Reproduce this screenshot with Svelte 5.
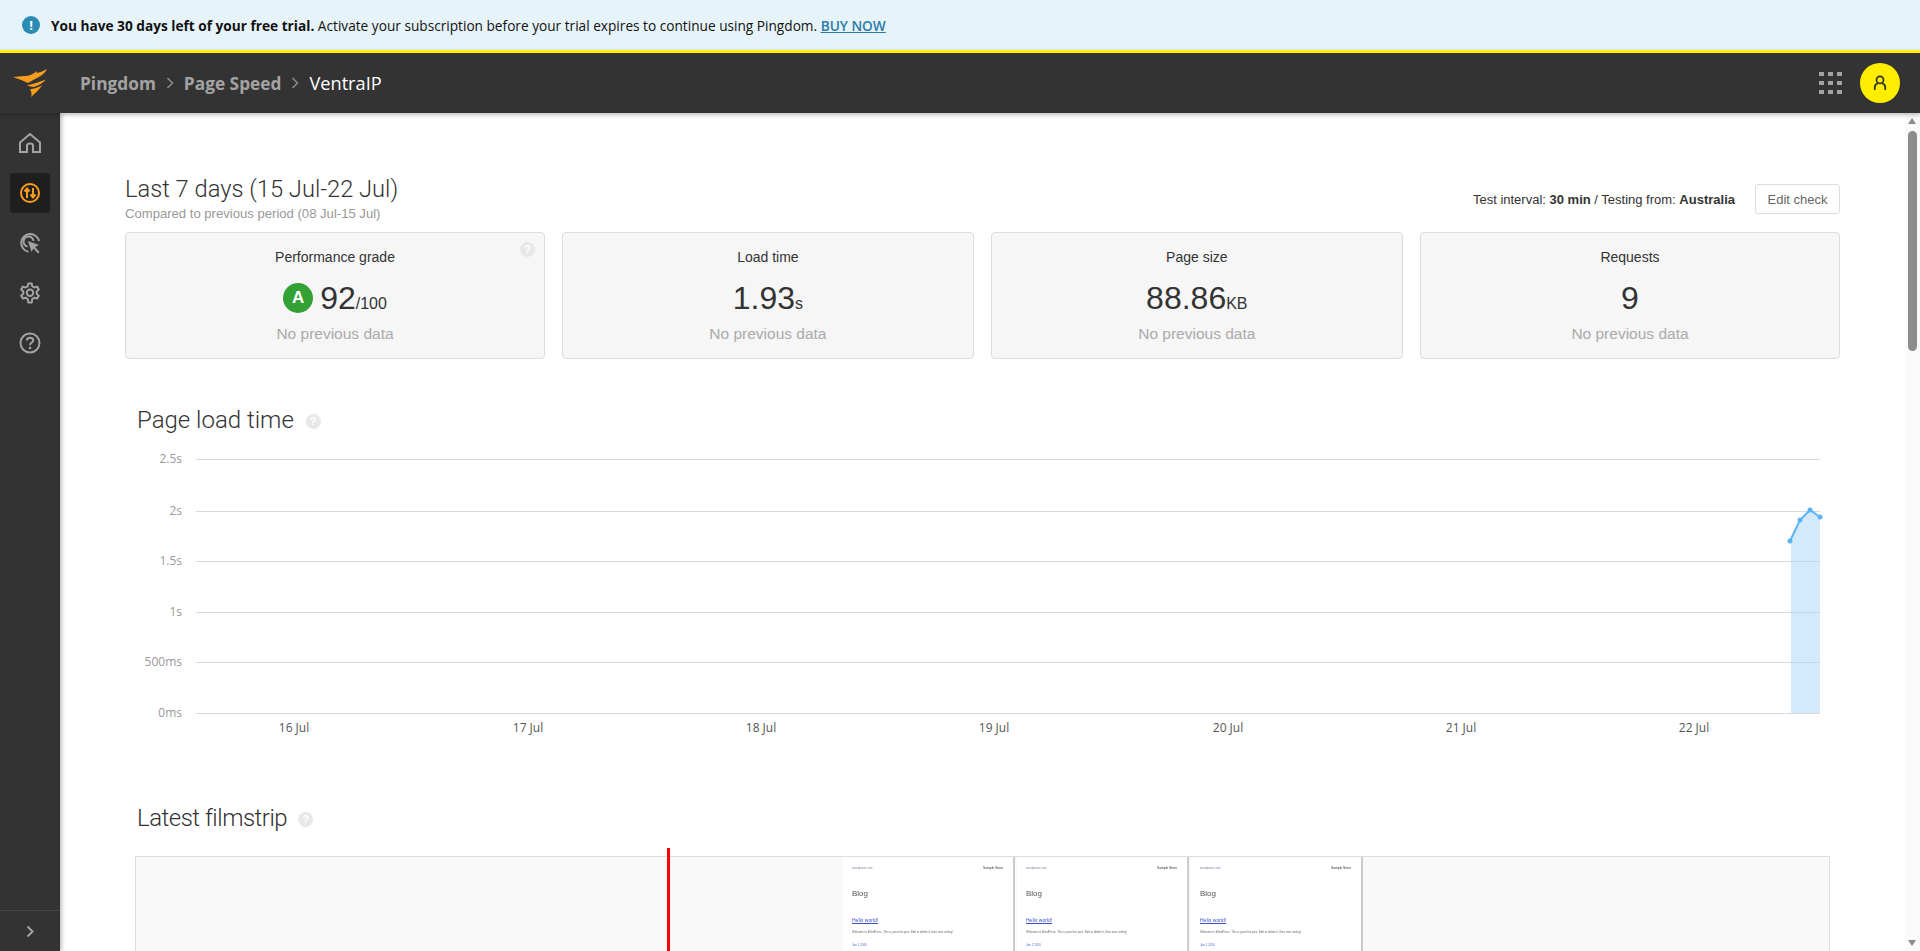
<script>
  const cards = [
    { label: 'Performance grade', value: '92', unit: '/100', grade: 'A', help: true },
    { label: 'Load time', value: '1.93', unit: 's' },
    { label: 'Page size', value: '88.86', unit: 'KB' },
    { label: 'Requests', value: '9', unit: '' }
  ];

  const grid = [
    { y: 458, label: '2.5s' },
    { y: 510, label: '2s' },
    { y: 560, label: '1.5s' },
    { y: 611, label: '1s' },
    { y: 661, label: '500ms' },
    { y: 712, label: '0ms' }
  ];
  const days = [
    { x: 294, label: '16 Jul' },
    { x: 528, label: '17 Jul' },
    { x: 761, label: '18 Jul' },
    { x: 994, label: '19 Jul' },
    { x: 1228, label: '20 Jul' },
    { x: 1461, label: '21 Jul' },
    { x: 1694, label: '22 Jul' }
  ];
  const points = [[1790, 540], [1800, 519], [1810, 509], [1820, 516]];
  const line = points.map((p) => p.join(',')).join(' ');
  const area = `1791,712 1791,538 1800,519 1810,509 1820,516 1820,712`;
</script>

<div class="page">
  <div class="banner">
    <span class="info">!</span>
    <p><b>You have 30 days left of your free trial.</b> Activate your subscription before your trial expires to continue using Pingdom. <a href="#buy">BUY NOW</a></p>
  </div>

  <header>
    <svg class="logo" viewBox="0 0 34 28" width="34" height="28">
      <path fill="#f99d1c" d="M0 8 L12 7 Q18 7 24 2 L23.5 4 Q29 3 34 0 Q31 6 24 9 Q20 11 15 14 Q9 11 0 8Z"/>
      <path fill="#f99d1c" d="M14 16.5 Q24 14 33 10.5 Q29 15 21 18 Q17 17.5 14 16.5Z"/>
      <path fill="#f99d1c" d="M17 20.5 Q23 19.5 29 16.5 Q26 21 18 28 Q19.5 24 17 20.5Z"/>
    </svg>
    <nav>
      <span class="crumb">Pingdom</span>
      <svg class="sep" viewBox="0 0 8 12" width="8" height="12"><path d="M1.5 1 L6.5 6 L1.5 11" fill="none" stroke="#8a8a8a" stroke-width="1.6"/></svg>
      <span class="crumb">Page Speed</span>
      <svg class="sep" viewBox="0 0 8 12" width="8" height="12"><path d="M1.5 1 L6.5 6 L1.5 11" fill="none" stroke="#8a8a8a" stroke-width="1.6"/></svg>
      <span class="current">VentraIP</span>
    </nav>
    <div class="apps">
      {#each Array(9) as _}<i></i>{/each}
    </div>
    <div class="avatar">
      <svg viewBox="0 0 16 18" width="14" height="16">
        <circle cx="8" cy="5.5" r="4" fill="none" stroke="#333" stroke-width="2"/>
        <path d="M2 17 V14 Q2 10.5 5.5 9.5 M14 17 V14 Q14 10.5 10.5 9.5" fill="none" stroke="#333" stroke-width="2"/>
      </svg>
    </div>
  </header>

  <div class="body">
    <aside>
      <div class="side-item">
        <svg viewBox="0 0 22 20" width="22" height="20"><path d="M1 9.5 L11 1 L21 9.5 V19 H14 V12.5 Q14 10.5 11 10.5 Q8 10.5 8 12.5 V19 H1Z" fill="none" stroke="#a3a3a3" stroke-width="2"/></svg>
      </div>
      <div class="side-item active">
        <svg viewBox="0 0 20 20" width="20" height="20">
          <circle cx="10" cy="10" r="9" fill="none" stroke="#f99d1c" stroke-width="2"/>
          <path d="M7 15 V6 M4.5 8.5 L7 5.5 L9.5 8.5 M13 5 V14 M10.5 11.5 L13 14.5 L15.5 11.5" fill="none" stroke="#f99d1c" stroke-width="2"/>
        </svg>
      </div>
      <div class="side-item">
        <svg viewBox="0 0 22 22" width="22" height="22">
          <path d="M20 9 A9 9 0 1 0 9.5 19.8" fill="none" stroke="#a3a3a3" stroke-width="2"/>
          <path d="M14.5 9 A5 5 0 1 0 8.5 14.5" fill="none" stroke="#a3a3a3" stroke-width="2"/>
          <path d="M9 9 L20 13 L16 15 L20.5 20 L19 21.5 L14.5 16.5 L12.5 20Z" fill="#a3a3a3"/>
        </svg>
      </div>
      <div class="side-item">
        <svg viewBox="0 0 22 22" width="22" height="22">
          <path d="M9.3 1.5 H12.7 L13.3 4.3 L15.4 5.5 L18.1 4.6 L19.8 7.5 L17.7 9.4 V11.8 L19.8 13.7 L18.1 16.6 L15.4 15.7 L13.3 17 L12.7 20.5 H9.3 L8.7 17 L6.6 15.7 L3.9 16.6 L2.2 13.7 L4.3 11.8 V9.4 L2.2 7.5 L3.9 4.6 L6.6 5.5 L8.7 4.3Z" fill="none" stroke="#a3a3a3" stroke-width="2" stroke-linejoin="round"/>
          <circle cx="11" cy="10.8" r="3.2" fill="none" stroke="#a3a3a3" stroke-width="2"/>
        </svg>
      </div>
      <div class="side-item">
        <svg viewBox="0 0 22 22" width="22" height="22">
          <circle cx="11" cy="11" r="9.5" fill="none" stroke="#a3a3a3" stroke-width="2"/>
          <path d="M7.8 8.5 Q8 5.8 11 5.8 Q14.2 5.8 14.2 8.3 Q14.2 10 12.4 10.8 Q11 11.4 11 13.2" fill="none" stroke="#a3a3a3" stroke-width="2"/>
          <circle cx="11" cy="16" r="1.3" fill="#a3a3a3"/>
        </svg>
      </div>
      <div class="side-foot">
        <svg viewBox="0 0 8 12" width="8" height="13"><path d="M1.5 1 L6.5 6 L1.5 11" fill="none" stroke="#a3a3a3" stroke-width="2"/></svg>
      </div>
    </aside>

    <main>
      <section class="top">
        <div>
          <h1>Last 7 days (15 Jul-22 Jul)</h1>
          <p class="compare">Compared to previous period (08 Jul-15 Jul)</p>
        </div>
        <div class="test">
          <span>Test interval: <b>30 min</b> / Testing from: <b>Australia</b></span>
          <button>Edit check</button>
        </div>
      </section>

      <section class="cards">
        {#each cards as c}
          <div class="card">
            {#if c.help}<span class="help corner">?</span>{/if}
            <div class="label">{c.label}</div>
            <div class="value">
              {#if c.grade}<span class="grade">{c.grade}</span>{/if}
              <span class="figure"><span class="num">{c.value}</span><span class="unit">{c.unit}</span></span>
            </div>
            <div class="prev">No previous data</div>
          </div>
        {/each}
      </section>

      <h2 class="load-title">Page load time <span class="help">?</span></h2>

      <svg class="chart" width="1800" height="300" viewBox="60 440 1800 300">
        {#each grid as g}
          <line x1="196" x2="1820" y1={g.y + 0.5} y2={g.y + 0.5} stroke="#d8d8d8"/>
          <text x="182" y={g.y + 4} text-anchor="end" class="ylab">{g.label}</text>
        {/each}
        {#each days as d}
          <text x={d.x} y="731" text-anchor="middle" class="xlab">{d.label}</text>
        {/each}
        <polygon points={area} fill="#a8d5f9" fill-opacity="0.5"/>
        <polyline points={line} fill="none" stroke="#5cb3f5" stroke-width="2"/>
        {#each points as p}
          <circle cx={p[0]} cy={p[1]} r="2.5" fill="#5cb3f5"/>
        {/each}
      </svg>

      <h2 class="film-title">Latest filmstrip <span class="help">?</span></h2>

      <div class="film">
        <div class="marker"></div>
        <div class="blank"></div>
        {#each [0, 1, 2] as f}
          <div class="frame">
            <div class="frame-top"><span class="site">wordpress site</span><span class="dark">Sample Store</span></div>
            <div class="blog">Blog</div>
            <div class="hello">Hello world!</div>
            <div class="welcome">Welcome to WordPress. This is your first post. Edit or delete it, then start writing!</div>
            <div class="date">Jan 1 2020</div>
          </div>
        {/each}
      </div>
    </main>

    <div class="scrollbar">
      <span class="arrow up"></span>
      <span class="thumb"></span>
      <span class="arrow down"></span>
    </div>
  </div>
</div>

<style>
  :global(body) {
    margin: 0;
    overflow: hidden;
    background: #fff;
  }
  .page {
    width: 1920px;
    height: 951px;
    display: flex;
    flex-direction: column;
    overflow: hidden;
    font-family: "Liberation Sans", Arial, sans-serif;
    color: #333;
  }
  .banner {
    height: 50px;
    flex: none;
    display: flex;
    align-items: center;
    gap: 11px;
    padding-left: 22px;
    background: #e6f3f9;
    font-family: "Open Sans", sans-serif;
    font-size: 13.66px;
    color: #111;
  }
  .banner p {
    margin: 0;
  }
  .banner b {
    font-weight: 700;
  }
  .banner a {
    color: #2a7ba8;
    font-weight: 600;
  }
  .info {
    width: 18px;
    height: 18px;
    border-radius: 50%;
    background: #2b8cb3;
    color: #fff;
    font-weight: 700;
    font-size: 13px;
    line-height: 18px;
    text-align: center;
  }
  header {
    height: 60px;
    flex: none;
    border-top: 3px solid #ffee00;
    background: #333;
    display: flex;
    align-items: center;
    padding: 0 20px 0 13px;
    box-shadow: 0 2px 4px rgba(0, 0, 0, 0.25);
    position: relative;
    z-index: 2;
  }
  nav {
    margin-left: 33px;
    display: flex;
    align-items: center;
    gap: 10px;
    font-family: "Open Sans", sans-serif;
    font-size: 18px;
  }
  .crumb {
    color: #a3a3a3;
    font-size: 17.3px;
    font-weight: 700;
  }
  .current {
    color: #fff;
    font-size: 18.2px;
    font-weight: 500;
  }
  .apps {
    margin-left: auto;
    width: 22px;
    display: grid;
    grid-template-columns: repeat(3, 5px);
    grid-auto-rows: 4px;
    gap: 5px 4px;
  }
  .apps i {
    background: #a3a3a3;
  }
  .avatar {
    margin-left: 19px;
    width: 40px;
    height: 40px;
    border-radius: 50%;
    background: #ffee00;
    display: flex;
    align-items: center;
    justify-content: center;
  }
  .body {
    flex: 1;
    display: flex;
    min-height: 0;
    position: relative;
  }
  aside {
    width: 60px;
    flex: none;
    background: #333;
    box-shadow: 2px 0 4px rgba(0, 0, 0, 0.25);
    position: relative;
    display: flex;
    flex-direction: column;
    align-items: center;
    padding-top: 10px;
    gap: 10px;
  }
  .side-item {
    width: 40px;
    height: 40px;
    border-radius: 3px;
    display: flex;
    align-items: center;
    justify-content: center;
  }
  .active {
    background: #1f1f1f;
  }
  .side-foot {
    margin-top: auto;
    align-self: stretch;
    height: 40px;
    border-top: 1px solid #484848;
    display: flex;
    align-items: center;
    justify-content: center;
  }
  main {
    flex: 1;
    min-width: 0;
    padding: 62px 0 0 65px;
    overflow: hidden;
  }
  .top {
    width: 1715px;
    display: flex;
    justify-content: space-between;
    align-items: flex-start;
  }
  h1 {
    margin: 0;
    font-family: Roboto, sans-serif;
    font-weight: 300;
    font-size: 23.7px;
    line-height: 28px;
  }
  .compare {
    margin: 3px 0 0;
    font-size: 13.1px;
    line-height: 15px;
    color: #999;
  }
  .test {
    display: flex;
    align-items: center;
    gap: 20px;
    font-size: 13px;
    padding-top: 9px;
  }
  button {
    height: 30px;
    width: 85px;
    padding: 0;
    background: #fff;
    border: 1px solid #ddd;
    border-radius: 3px;
    font-family: inherit;
    font-size: 13px;
    color: #666;
  }
  .cards {
    width: 1715px;
    margin-top: 11px;
    display: grid;
    grid-template-columns: 420px 411.5px 412px 420px;
    justify-content: space-between;
  }
  .card {
    position: relative;
    height: 127px;
    box-sizing: border-box;
    background: #f6f6f6;
    border: 1px solid #ddd;
    border-radius: 4px;
    text-align: center;
    padding-top: 15px;
  }
  .label {
    font-size: 14px;
    line-height: 18px;
  }
  .value {
    height: 46px;
    margin-top: 9px;
    display: flex;
    align-items: center;
    justify-content: center;
  }
  .figure {
    display: flex;
    align-items: baseline;
  }
  .num {
    font-size: 32px;
    line-height: 38px;
  }
  .unit {
    font-size: 16px;
  }
  .grade {
    width: 30px;
    height: 30px;
    border-radius: 50%;
    background: #34a134;
    color: #fff;
    font-weight: 700;
    font-size: 17px;
    line-height: 30px;
    margin-right: 7px;
  }
  .prev {
    margin-top: 4px;
    font-size: 15.5px;
    line-height: 18px;
    color: #aaa;
  }
  .help {
    display: inline-block;
    width: 15px;
    height: 15px;
    border-radius: 50%;
    background: #e8e8e8;
    color: #fff;
    font-family: "Liberation Sans", sans-serif;
    font-size: 11px;
    font-weight: 700;
    line-height: 15px;
    letter-spacing: 0;
    text-align: center;
    vertical-align: middle;
    margin-left: 6px;
  }
  .corner {
    position: absolute;
    top: 9px;
    right: 9px;
  }
  h2 {
    margin: 0;
    font-family: Roboto, sans-serif;
    font-weight: 300;
    font-size: 24px;
    line-height: 30px;
  }
  .load-title {
    margin: 46px 0 0 12px;
  }
  .chart {
    display: block;
    margin: 6px 0 0 -65px;
  }
  .ylab {
    font-family: "Open Sans", sans-serif;
    font-size: 12px;
    fill: #999;
  }
  .xlab {
    font-family: "Open Sans", sans-serif;
    font-size: 12px;
    fill: #555;
  }
  .film-title {
    margin: 62px 0 0 12px;
    letter-spacing: -0.5px;
  }
  .film {
    position: relative;
    margin: 23px 0 0 10px;
    width: 1695px;
    height: 200px;
    box-sizing: border-box;
    background: #f9f9f9;
    border: 1px solid #ddd;
    display: flex;
  }
  .marker {
    position: absolute;
    left: 531px;
    top: -9px;
    bottom: 0;
    width: 3px;
    background: #f00;
  }
  .blank {
    width: 707px;
    flex: none;
  }
  .frame {
    width: 172px;
    margin-right: 2px;
    box-sizing: border-box;
    background: #fff;
    border-right: 2px solid #ccc;
    padding: 8px 9px;
    font-size: 3.2px;
    line-height: 6px;
    color: #666;
  }
  .frame > div {
    filter: blur(0.3px);
  }
  .frame-top {
    display: flex;
    justify-content: space-between;
  }
  .site {
    color: #8f7db5;
  }
  .dark {
    color: #333;
    font-size: 3.3px;
    margin-right: 1px;
  }
  .blog {
    margin-top: 18px;
    font-size: 8px;
    line-height: 10px;
    color: #555;
  }
  .hello {
    margin-top: 17px;
    font-size: 5px;
    line-height: 8px;
    color: #3b4fc4;
    text-decoration: underline;
  }
  .welcome {
    margin-top: 5px;
    font-size: 2.85px;
  }
  .date {
    margin-top: 7px;
    font-size: 3px;
    color: #5566cc;
  }
  .scrollbar {
    position: absolute;
    top: 0;
    right: 0;
    bottom: 0;
    width: 15px;
    background: #fafafa;
    z-index: 1;
  }
  .thumb {
    position: absolute;
    top: 18px;
    left: 3px;
    width: 9px;
    height: 220px;
    border-radius: 5px;
    background: #8c8c8c;
  }
  .arrow {
    position: absolute;
    left: 3px;
    width: 0;
    height: 0;
    border-left: 4.5px solid transparent;
    border-right: 4.5px solid transparent;
  }
  .up {
    top: 5px;
    border-bottom: 6px solid #8c8c8c;
  }
  .down {
    bottom: 5px;
    border-top: 6px solid #8c8c8c;
  }
</style>
